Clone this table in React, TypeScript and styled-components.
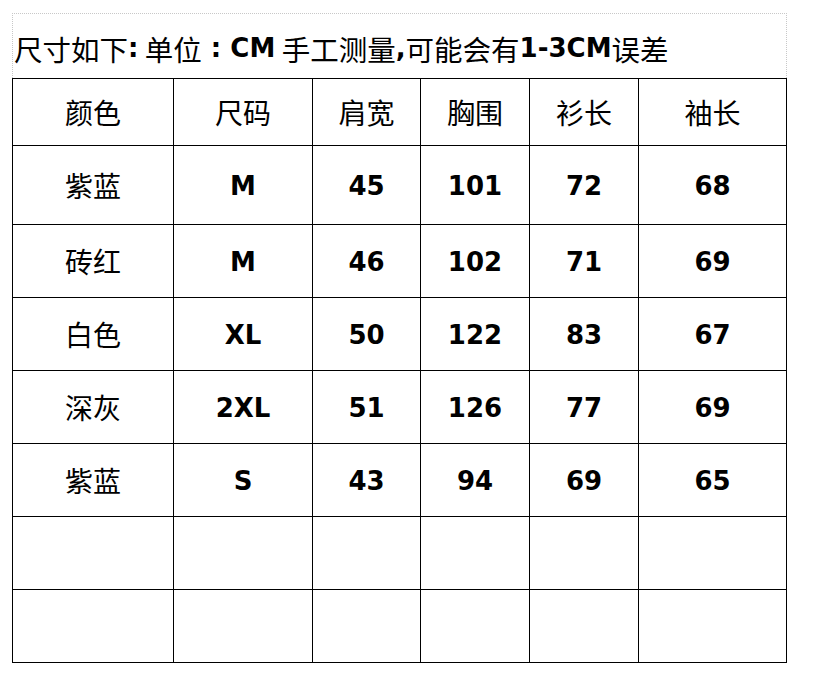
import * as React from "react";
import styled, { createGlobalStyle } from "styled-components";

const GlobalStyle = createGlobalStyle`
  html, body {
    margin: 0;
    padding: 0;
    background: #ffffff;
  }
`;

const Page = styled.div`
  padding: 13px 0 0 12px;
  font-family: "Noto Sans CJK SC", sans-serif;
  color: #000;
`;

const Sheet = styled.div`
  width: 775px;
  display: flex;
  flex-direction: column;
`;

const TitleBox = styled.div`
  box-sizing: border-box;
  height: 65px;
  border: 1px dotted #c8c8c8;
  border-bottom: none;
  padding: 4px 0 0 1px;
  display: flex;
  align-items: center;
  font-size: 28.5px;
  white-space: nowrap;
`;

const Strong = styled.b`
  font-family: "DejaVu Sans", Verdana, sans-serif;
  font-weight: bold;
  font-size: 26px;
`;

const Grid = styled.div`
  display: grid;
  grid-template-columns: 161px 139px 108px 109px 109px 148px;
  grid-template-rows: 67px 79px repeat(6, 73px);
  border-left: 1px solid #000;
  border-top: 1px solid #000;
`;

const Cell = styled.div<{ $bold?: boolean }>`
  box-sizing: border-box;
  border-right: 1px solid #000;
  border-bottom: 1px solid #000;
  display: flex;
  align-items: center;
  justify-content: center;
  font-family: ${({ $bold }) =>
    $bold ? `"DejaVu Sans", Verdana, sans-serif` : `"Noto Sans CJK SC", sans-serif`};
  font-weight: ${({ $bold }) => ($bold ? "bold" : "normal")};
  font-size: ${({ $bold }) => ($bold ? "26px" : "28px")};
  padding-top: ${({ $bold }) => ($bold ? "2px" : "0")};
`;

const headers = ["颜色", "尺码", "肩宽", "胸围", "衫长", "袖长"];

const rows = [
  ["紫蓝", "M", "45", "101", "72", "68"],
  ["砖红", "M", "46", "102", "71", "69"],
  ["白色", "XL", "50", "122", "83", "67"],
  ["深灰", "2XL", "51", "126", "77", "69"],
  ["紫蓝", "S", "43", "94", "69", "65"],
  ["", "", "", "", "", ""],
  ["", "", "", "", "", ""],
];

export default function App() {
  return (
    <Page>
      <GlobalStyle />
      <Sheet>
        <TitleBox>
          尺寸如下<Strong>:</Strong>&nbsp;单位<Strong>&nbsp;:&nbsp;CM</Strong>&nbsp;手工测量
          <Strong>,</Strong>可能会有<Strong>1-3CM</Strong>误差
        </TitleBox>
        <Grid>
          {headers.map((h) => (
            <Cell key={h}>{h}</Cell>
          ))}
          {rows.map((row, r) =>
            row.map((v, c) => (
              <Cell key={`${r}-${c}`} $bold={c > 0}>
                {v}
              </Cell>
            ))
          )}
        </Grid>
      </Sheet>
    </Page>
  );
}
